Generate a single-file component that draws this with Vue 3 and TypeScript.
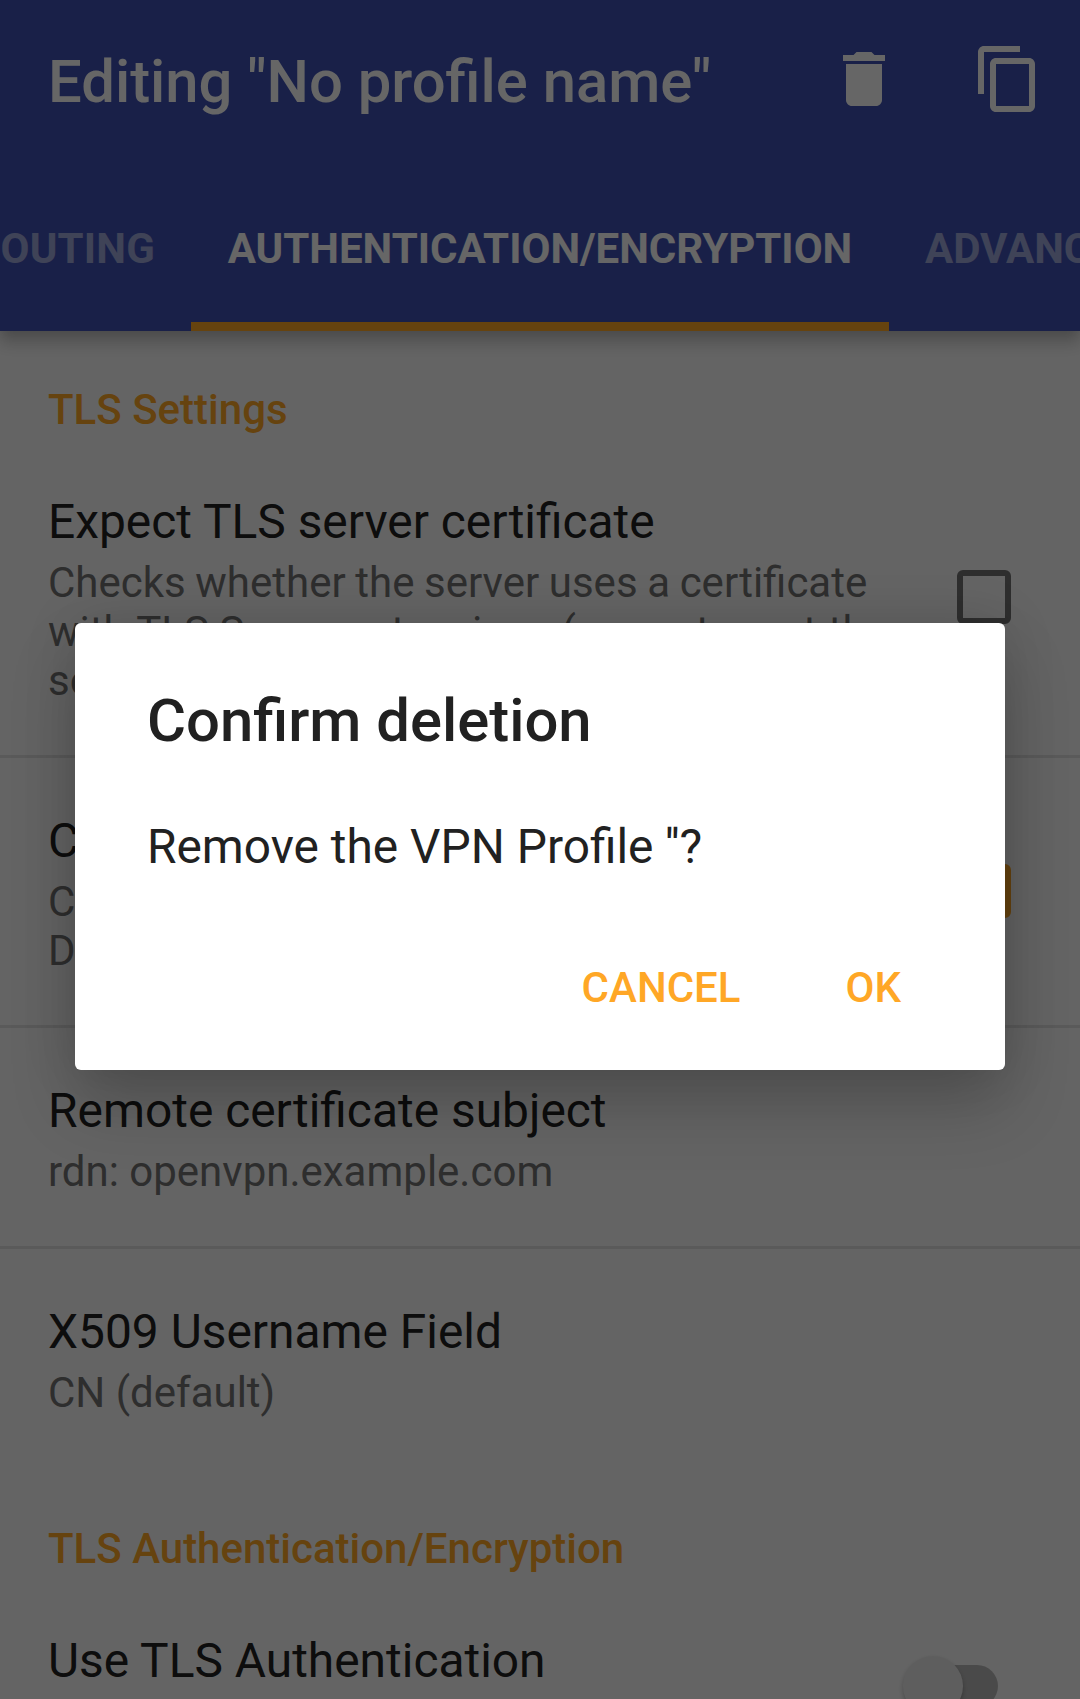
<script setup lang="ts">
interface Preference {
  title: string
  summary: string[]
  control?: 'unchecked' | 'checked'
}

const preferences: Preference[] = [
  {
    title: 'Expect TLS server certificate',
    summary: [
      'Checks whether the server uses a certificate',
      'with TLS Server extensions (--remote-cert-tls',
      'server)',
    ],
    control: 'unchecked',
  },
  {
    title: 'Certificate Hostname Check',
    summary: ['Checks the Remote Server Certificate Subject', 'DN'],
    control: 'checked',
  },
  { title: 'Remote certificate subject', summary: ['rdn: openvpn.example.com'] },
  { title: 'X509 Username Field', summary: ['CN (default)'] },
]
</script>

<template>
  <div class="screen">
    <header class="header">
      <div class="toolbar">
        <h1 class="toolbar-title">Editing "No profile name"</h1>
        <div class="actions">
          <svg class="action" viewBox="0 0 24 24" aria-label="Delete">
            <path d="M6 19c0 1.1.9 2 2 2h8c1.1 0 2-.9 2-2V7H6v12zM19 4h-3.5l-1-1h-5l-1 1H5v2h14V4z" />
          </svg>
          <svg class="action" viewBox="0 0 24 24" aria-label="Duplicate">
            <path d="M16 1H4c-1.1 0-2 .9-2 2v14h2V3h12V1zm3 4H8c-1.1 0-2 .9-2 2v14c0 1.1.9 2 2 2h11c1.1 0 2-.9 2-2V7c0-1.1-.9-2-2-2zm0 16H8V7h11v14z" />
          </svg>
        </div>
      </div>
      <nav class="tabs">
        <span class="tab before">ROUTING</span>
        <span class="tab active">AUTHENTICATION/ENCRYPTION</span>
        <span class="tab after">ADVANCED</span>
      </nav>
    </header>

    <main class="content">
      <h2 class="category">TLS Settings</h2>
      <section v-for="pref in preferences" :key="pref.title" class="pref">
        <div class="pref-text">
          <div class="pref-title">{{ pref.title }}</div>
          <div v-for="line in pref.summary" :key="line" class="pref-summary">{{ line }}</div>
        </div>
        <span v-if="pref.control" class="checkbox" :class="pref.control"></span>
      </section>
      <h2 class="category second">TLS Authentication/Encryption</h2>
      <section class="pref switch-row">
        <div class="pref-text">
          <div class="pref-title">Use TLS Authentication</div>
        </div>
        <span class="switch"><span class="knob"></span></span>
      </section>
    </main>

    <div class="scrim">
      <div class="dialog" role="dialog">
        <h2 class="dialog-title">Confirm deletion</h2>
        <p class="dialog-message">Remove the VPN Profile ''?</p>
        <div class="dialog-buttons">
          <button class="cancel">CANCEL</button>
          <button class="ok">OK</button>
        </div>
      </div>
    </div>
  </div>
</template>

<style>
body {
  margin: 0;
}
</style>

<style scoped>
.screen {
  position: relative;
  width: 1080px;
  height: 1699px;
  overflow: hidden;
  background: #fafafa;
  color: #212121;
  font-family: Roboto, sans-serif;
}
h1,
h2,
p {
  margin: 0;
}
.header {
  position: relative;
  z-index: 1;
  height: 331px;
  background: #3f51b5;
  color: #fff;
  box-shadow: 0 12px 15px rgba(0, 0, 0, 0.2), 0 0 12px rgba(0, 0, 0, 0.12);
}
.toolbar {
  display: flex;
  align-items: center;
  justify-content: space-between;
  height: 168px;
  padding: 0 36px 0 48px;
  box-sizing: border-box;
}
.toolbar-title {
  margin-bottom: 4px;
  font-size: 59.8px;
  line-height: 70px;
  font-weight: 500;
  white-space: nowrap;
}
.actions {
  display: flex;
  gap: 72px;
  margin-bottom: 10px;
}
.action {
  width: 72px;
  height: 72px;
  fill: #fff;
}
.tabs {
  display: flex;
  height: 163px;
  overflow: hidden;
  font-size: 42px;
  line-height: 49px;
  font-weight: 700;
  white-space: nowrap;
}
.tab {
  box-sizing: border-box;
  min-width: 0;
  padding: 56px 36px 0;
  color: rgba(255, 255, 255, 0.5);
}
.before {
  display: flex;
  justify-content: flex-end;
  flex: 0 0 191px;
  letter-spacing: 0.2px;
}
.active {
  flex: 0 0 698px;
  text-align: center;
  color: #fff;
  border-bottom: 9px solid #ffa726;
}
.after {
  flex: 0 0 191px;
}
.category {
  padding: 54px 48px 0;
  height: 108px;
  box-sizing: border-box;
  font-size: 42px;
  line-height: 49px;
  font-weight: 500;
  color: #ffa726;
}
.category.second {
  margin-top: 3px;
}
.pref {
  display: flex;
  align-items: center;
  justify-content: space-between;
  padding: 54px 69px 50px 48px;
}
.pref + .pref {
  border-top: 3px solid #e1e1e1;
}
.pref-text {
  white-space: nowrap;
}
.pref-title {
  padding: 1px 0 8px;
  font-size: 47.9px;
  line-height: 56px;
  color: #212121;
}
.pref-summary {
  font-size: 42px;
  line-height: 49px;
  color: #737373;
}
.pref-title + .pref-summary:not(:last-child) {
  word-spacing: -0.8px;
}
.checkbox {
  flex: none;
  width: 54px;
  height: 54px;
  margin-bottom: 5px;
  box-sizing: border-box;
  border: 6px solid #737373;
  border-radius: 6px;
}
.checked {
  background: #ffa726;
  border-color: #ffa726;
}
.switch-row {
  align-items: flex-start;
  padding-right: 82px;
}
.switch {
  width: 84px;
  height: 42px;
  margin-top: 33px;
  border-radius: 21px;
  background: #b9b9b9;
}
.knob {
  display: block;
  width: 60px;
  height: 60px;
  margin: -9px 0 0 -11px;
  border-radius: 50%;
  background: #ececec;
  box-shadow: 0 3px 5px rgba(0, 0, 0, 0.25);
}
.scrim {
  position: absolute;
  inset: 0;
  z-index: 2;
  padding: 623px 75px 0;
  background: rgba(0, 0, 0, 0.6);
}
.dialog {
  height: 447px;
  padding: 63px 72px 0;
  box-sizing: border-box;
  border-radius: 6px;
  background: #fff;
  box-shadow: 0 36px 66px rgba(0, 0, 0, 0.19), 0 0 54px rgba(0, 0, 0, 0.12);
}
.dialog-title {
  font-size: 59.8px;
  line-height: 70px;
  font-weight: 500;
}
.dialog-message {
  margin-top: 63px;
  font-size: 47.85px;
  line-height: 56px;
}
.dialog-buttons {
  display: flex;
  justify-content: flex-end;
  gap: 105px;
  margin-top: 88px;
  padding-right: 32px;
}
button {
  padding: 0;
  border: 0;
  background: none;
  font: 500 42px/49px Roboto, sans-serif;
  color: #ffa726;
}
</style>
